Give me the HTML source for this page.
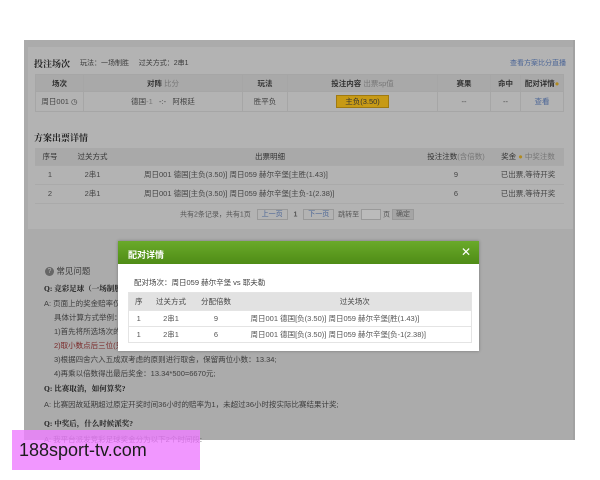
<!DOCTYPE html>
<html><head><meta charset="utf-8"><style>
*{margin:0;padding:0;box-sizing:border-box}
body{width:600px;height:480px;background:#fff;position:relative;overflow:hidden;font-family:"Liberation Sans","Noto Sans CJK SC",sans-serif;font-size:8px;color:#3a3a3a}
.abs{position:absolute;white-space:nowrap}
#gray{position:absolute;left:24px;top:40px;width:551px;height:400px;background:#ababab;border-right:2px solid #a2a2a2}
#panel{position:absolute;left:28px;top:47px;width:545px;height:182px;background:#b3b3b3}
table{border-collapse:collapse;position:absolute}
td{text-align:center;font-size:7.5px;color:#444}
.t1 td{border:1px solid #a6a6a6}
.hd td{background:#a9a9a9;font-weight:bold;color:#333}
.t2 td{border-bottom:1px solid #aaa}
.b{font-weight:bold;color:#222}
.lnk{color:#4a6496}
.dim{color:#777}
#modal{position:absolute;left:118px;top:241px;width:361px;height:110px;background:#fff;box-shadow:0 0 3px rgba(0,0,0,.3)}
#mh{height:23px;background:linear-gradient(#6aaa2a,#4f8c16);color:#fff;font-weight:bold;font-size:9px;padding:7px 0 0 10px}
.mt td{border-bottom:1px solid #e4e4e4;color:#555;font-size:7.5px}
.mt .h td{background:#e2e2e2;color:#444}
.faq{font-size:7.5px;color:#3d3d3d}
.q{font-weight:bold;color:#222;font-family:"Liberation Serif","Noto Serif CJK SC",serif}
</style></head><body>
<div id="gray"></div>
<div id="panel"></div>
<div class="abs b" style="left:34px;top:57px;font-size:9px;font-family:'Liberation Serif','Noto Serif CJK SC',serif">投注场次</div>
<div class="abs" style="left:80px;top:58px;font-size:7px">玩法：一场制胜 &nbsp;&nbsp;&nbsp; 过关方式：2串1</div>
<div class="abs lnk" style="left:510px;top:58px;font-size:7px">查看方案比分直播</div>
<table class="t1" style="left:35px;top:74px;width:529px">
<tr class="hd" style="height:17px"><td style="width:48px">场次</td><td style="width:159px">对阵 <span style="font-weight:normal;color:#777">比分</span></td><td style="width:45px">玩法</td><td style="width:150px">投注内容 <span style="font-weight:normal;color:#777">出票sp值</span></td><td style="width:53px">赛果</td><td style="width:30px">命中</td><td>配对详情<span style="color:#b08a20">●</span></td></tr>
<tr style="height:20px"><td>周日001 ◷</td><td>德国<span class="dim">-1</span> &nbsp; -:- &nbsp; 阿根廷</td><td>胜平负</td><td><span style="background:#c79a16;border:1px solid #a07a10;padding:1px 8px;color:#333">主负(3.50)</span></td><td>--</td><td>--</td><td class="lnk">查看</td></tr>
</table>
<div class="abs b" style="left:34px;top:131px;font-size:9px;font-family:'Liberation Serif','Noto Serif CJK SC',serif">方案出票详情</div>
<table class="t2" style="left:35px;top:148px;width:529px">
<tr class="hd" style="height:17px"><td style="width:30px;font-weight:normal">序号</td><td style="width:55px;font-weight:normal">过关方式</td><td style="width:300px;font-weight:normal">出票明细</td><td style="width:72px;font-weight:normal">投注注数<span class="dim">(含倍数)</span></td><td style="font-weight:normal">奖金 <span style="color:#b08a20">●</span> <span class="dim">中奖注数</span></td></tr>
<tr style="height:19px"><td>1</td><td>2串1</td><td style="text-align:left;padding-left:24px">周日001 德国[主负(3.50)] 周日059 赫尔辛堡[主胜(1.43)]</td><td>9</td><td>已出票,等待开奖</td></tr>
<tr style="height:19px"><td>2</td><td>2串1</td><td style="text-align:left;padding-left:24px">周日001 德国[主负(3.50)] 周日059 赫尔辛堡[主负-1(2.38)]</td><td>6</td><td>已出票,等待开奖</td></tr>
</table>
<div class="abs" style="left:180px;top:209px;font-size:7px;color:#555">共有2条记录，共有1页 &nbsp; <span style="border:1px solid #999;padding:1px 4px;color:#4a6496">上一页</span> &nbsp; <b>1</b> &nbsp; <span style="border:1px solid #999;padding:1px 4px;color:#4a6496">下一页</span> &nbsp;跳转至 <span style="display:inline-block;width:20px;height:11px;border:1px solid #999;vertical-align:middle;background:#bbb"></span> 页 <span style="border:1px solid #999;padding:1px 3px;background:#a5a5a5">确定</span></div>

<div class="abs faq" style="left:45px;top:265px;font-size:8.5px"><span style="display:inline-block;width:9px;height:9px;border-radius:50%;background:#666;color:#bbb;font-size:7px;text-align:center;line-height:9px;vertical-align:middle">?</span> 常见问题</div>
<div class="abs faq q" style="left:44px;top:283px">Q: 竞彩足球（一场制胜</div>
<div class="abs faq" style="left:44px;top:298px">A: 页面上的奖金赔率仅供</div>
<div class="abs faq" style="left:54px;top:312px">具体计算方式举例：选</div>
<div class="abs faq" style="left:54px;top:326px">1)首先将所选场次的赔</div>
<div class="abs faq" style="left:54px;top:340px;color:#7a2a2a">2)取小数点后三位(只截</div>
<div class="abs faq" style="left:54px;top:354px">3)根据四舍六入五成双考虑的原则进行取舍，保留两位小数：13.34;</div>
<div class="abs faq" style="left:54px;top:368px">4)再乘以倍数得出最后奖金：13.34*500=6670元;</div>
<div class="abs faq q" style="left:44px;top:383px">Q: 比赛取消，如何算奖?</div>
<div class="abs faq" style="left:44px;top:399px">A: 比赛因故延期超过原定开奖时间36小时的赔率为1，未超过36小时按实际比赛结果计奖;</div>
<div class="abs faq q" style="left:44px;top:418px">Q: 中奖后，什么时候派奖?</div>
<div class="abs faq" style="left:44px;top:434px">A: 我平台派发竞彩足球奖金分为以下2个时间段:</div>

<div id="modal">
<div id="mh">配对详情<span style="position:absolute;right:8px;top:4px;font-size:12px;font-weight:normal">✕</span></div>
<div class="abs" style="left:16px;top:36px;color:#444;font-size:7.5px">配对场次：周日059 赫尔辛堡 vs 耶夫勒</div>
<table class="mt" style="left:10px;top:51px;width:344px;border:1px solid #e4e4e4">
<tr class="h" style="height:18px"><td style="width:20px">序</td><td style="width:45px">过关方式</td><td style="width:45px">分配倍数</td><td>过关场次</td></tr>
<tr style="height:16px"><td>1</td><td>2串1</td><td>9</td><td style="text-align:left;padding-left:12px">周日001 德国[负(3.50)] 周日059 赫尔辛堡[胜(1.43)]</td></tr>
<tr style="height:16px"><td>1</td><td>2串1</td><td>6</td><td style="text-align:left;padding-left:12px">周日001 德国[负(3.50)] 周日059 赫尔辛堡[负-1(2.38)]</td></tr>
</table>
</div>

<div class="abs" style="left:12px;top:430px;width:188px;height:40px;background:rgba(238,128,255,.82)"></div>
<div class="abs" style="left:19px;top:440px;font-size:18px;color:#1c1c1c;font-family:'Liberation Sans',sans-serif">188sport-tv.com</div>
</body></html>
